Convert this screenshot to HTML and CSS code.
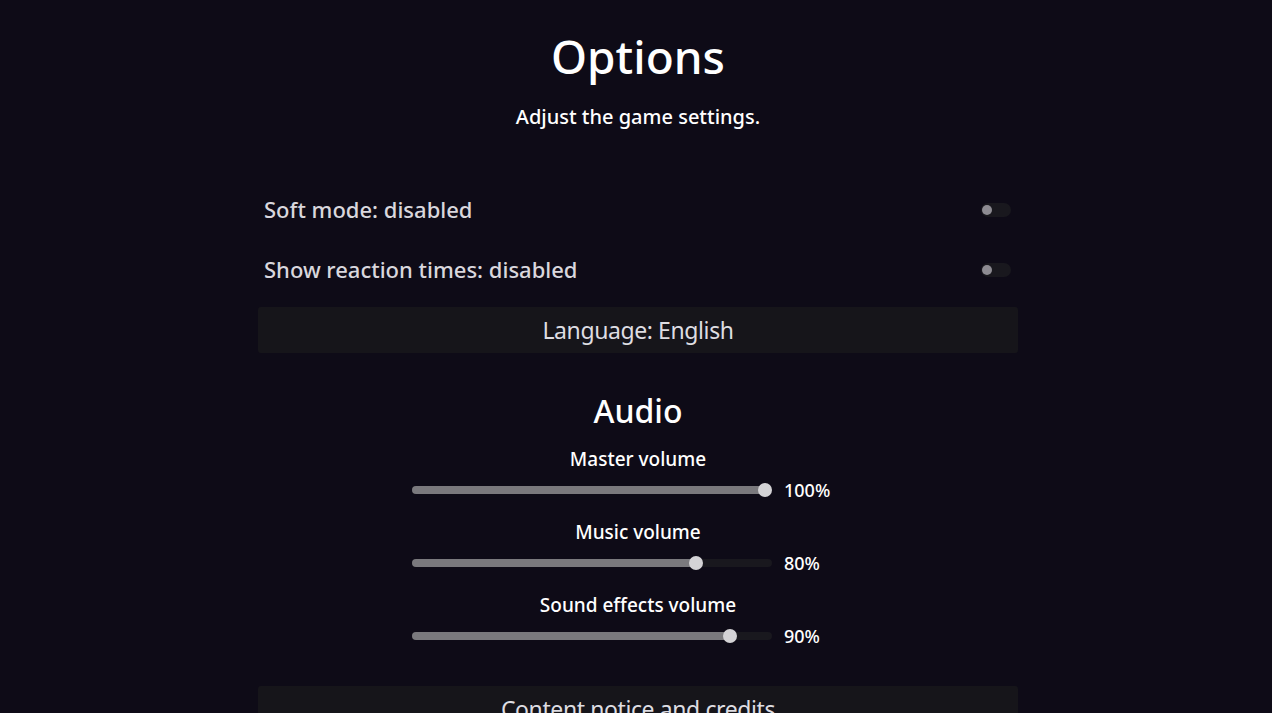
FILE: index.html
```html
<!DOCTYPE html>
<html lang="en">
<head>
    <meta charset="UTF-8">
    <meta name="viewport" content="width=device-width, initial-scale=1.0">
    <title>Options</title>
    <link rel="stylesheet" href="styles.css">
</head>
<body>
    <div class="options">
        <h1 class="title">Options</h1>
        <p class="subtitle">Adjust the game settings.</p>

        <div class="toggle-row">
            <span class="toggle-label">Soft mode: disabled</span>
            <span class="toggle"><span class="knob"></span></span>
        </div>
        <div class="toggle-row">
            <span class="toggle-label">Show reaction times: disabled</span>
            <span class="toggle"><span class="knob"></span></span>
        </div>

        <button class="wide-button">Language: English</button>

        <h2 class="section">Audio</h2>

        <div class="volume">
            <div class="volume-label">Master volume</div>
            <div class="volume-row">
                <div class="slider"><div class="fill" style="width: calc(1 * (100% - 14px) + 7px)"></div><div class="thumb" style="left: calc(1 * (100% - 14px))"></div></div>
                <span class="value">100%</span>
            </div>
        </div>
        <div class="volume">
            <div class="volume-label">Music volume</div>
            <div class="volume-row">
                <div class="slider"><div class="fill" style="width: calc(0.8 * (100% - 14px) + 7px)"></div><div class="thumb" style="left: calc(0.8 * (100% - 14px))"></div></div>
                <span class="value">80%</span>
            </div>
        </div>
        <div class="volume">
            <div class="volume-label">Sound effects volume</div>
            <div class="volume-row">
                <div class="slider"><div class="fill" style="width: calc(0.9 * (100% - 14px) + 7px)"></div><div class="thumb" style="left: calc(0.9 * (100% - 14px))"></div></div>
                <span class="value">90%</span>
            </div>
        </div>

        <button class="wide-button credits">Content notice and credits</button>
    </div>
</body>
</html>
```

FILE: styles.css
```css
body {
    margin: 0;
    background-color: #0e0b17;
    color: #ffffff;
    font-family: "Noto Sans", "Open Sans", sans-serif;
    overflow: hidden;
}
.options {
    width: 760px;
    margin: 0 auto;
    padding: 26px 0 0 4px;
}
.title {
    margin: 0;
    font-size: 46px;
    font-weight: 500;
    line-height: 60px;
    text-align: center;
}
.subtitle {
    margin: 16px 0 0;
    font-size: 20px;
    font-weight: 500;
    line-height: 30px;
    text-align: center;
}
.toggle-row {
    display: flex;
    align-items: center;
    justify-content: space-between;
    height: 60px;
    padding: 0 7px 0 6px;
}
.toggle-row:first-of-type {
    margin-top: 47px;
}
.toggle-label {
    font-size: 22px;
    font-weight: 500;
    color: #d9d7dd;
}
.toggle {
    position: relative;
    width: 30px;
    height: 14px;
    margin-top: 1px;
    border-radius: 7px;
    background-color: #19181e;
}
.knob {
    position: absolute;
    left: 1px;
    top: 2px;
    width: 10px;
    height: 10px;
    border-radius: 50%;
    background-color: #8d8b92;
}
.wide-button {
    display: block;
    width: 100%;
    height: 46px;
    margin-top: 8px;
    border: none;
    border-radius: 3px;
    background-color: #16151a;
    color: #dedde2;
    font-family: inherit;
    font-size: 23px;
    letter-spacing: -0.4px;
}
.section {
    margin: 36px 0 0;
    font-size: 32px;
    font-weight: 500;
    line-height: 44px;
    text-align: center;
}
.volume {
    margin-top: 11px;
}
.section + .volume {
    margin-top: 12px;
}
.volume-label {
    font-size: 19px;
    font-weight: 500;
    line-height: 28px;
    text-align: center;
}
.volume-row {
    display: flex;
    align-items: center;
    height: 34px;
    padding-left: 154px;
}
.slider {
    position: relative;
    width: 360px;
    height: 8px;
    border-radius: 4px;
    background-color: #19181e;
}
.fill {
    height: 100%;
    border-radius: 4px;
    background-color: #7a797d;
}
.thumb {
    position: absolute;
    top: -3px;
    width: 14px;
    height: 14px;
    border-radius: 50%;
    background-color: #d4d3d6;
}
.value {
    margin-left: 12px;
    font-size: 18px;
    font-weight: 500;
}
.credits {
    margin-top: 33px;
}
```
